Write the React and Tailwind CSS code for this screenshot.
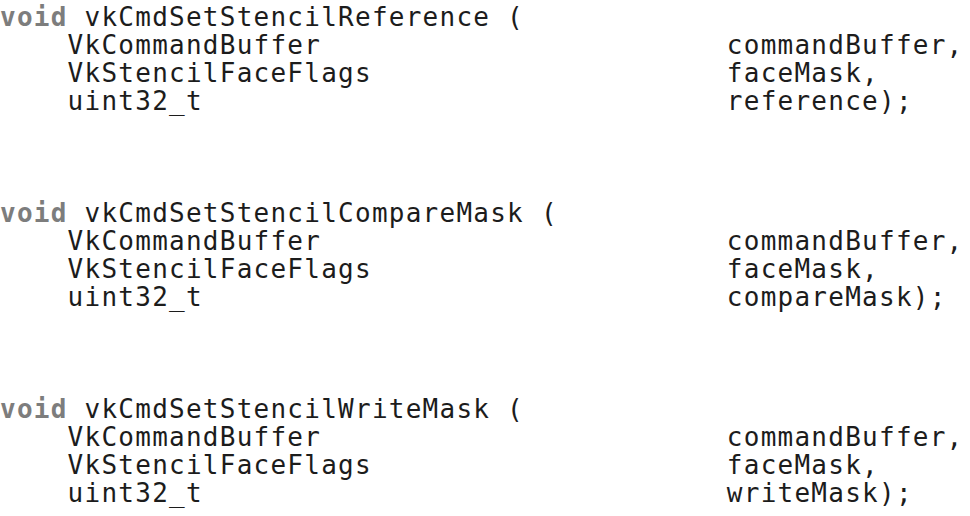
import React from 'react';

const blocks = [
  { name: 'vkCmdSetStencilReference', last: 'reference);' },
  { name: 'vkCmdSetStencilCompareMask', last: 'compareMask);' },
  { name: 'vkCmdSetStencilWriteMask', last: 'writeMask);' },
];

const pad = (s, n) => s + ' '.repeat(Math.max(0, n - s.length));

const App = () => {
  return (
    <div className="w-[970px] h-[516px] bg-white overflow-hidden">
      <pre
        className="pt-[3px] text-[26px] leading-[28px] tracking-[1.25px] text-[#1c1c1c]"
        style={{ fontFamily: '"DejaVu Sans Mono", "Liberation Mono", monospace' }}
      >
        {blocks.map((b, i) => (
          <React.Fragment key={b.name}>
            <span className="font-bold text-[#7d7d7d]">void</span>
            {` ${b.name} (\n`}
            {pad('    VkCommandBuffer', 43) + 'commandBuffer,\n'}
            {pad('    VkStencilFaceFlags', 43) + 'faceMask,\n'}
            {pad('    uint32_t', 43) + b.last + '\n'}
            {i < blocks.length - 1 ? '\n\n\n' : ''}
          </React.Fragment>
        ))}
      </pre>
    </div>
  );
};

export default App;
